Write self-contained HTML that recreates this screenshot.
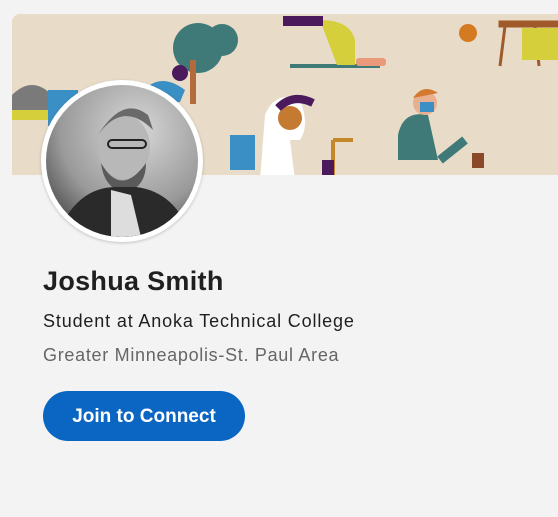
<!DOCTYPE html>
<html><head><style>
html,body{margin:0;padding:0;background:#f3f3f3;width:558px;height:517px;overflow:hidden;font-family:"Liberation Sans",sans-serif}
.banner{position:absolute;left:12px;top:14px;width:546px;height:161px;background:#e8dcc8;border-radius:8px 0 0 0;overflow:hidden}
.av{position:absolute;left:41px;top:80px;width:162px;height:162px;border-radius:50%;background:#fff;box-shadow:0 1px 3px rgba(0,0,0,.2)}
.av .in{position:absolute;left:5px;top:5px;width:152px;height:152px;border-radius:50%;background:radial-gradient(circle at 60% 30%,#d8d8d8,#9a9a9a 55%,#3a3a3a 90%);overflow:hidden}
h1{position:absolute;left:43px;top:266px;margin:0;font-size:27px;font-weight:bold;color:#1f1f1f;letter-spacing:0.3px}
.t{position:absolute;left:43px;top:311px;font-size:18px;color:#1f1f1f;letter-spacing:0.85px}
.l{position:absolute;left:43px;top:345px;font-size:18px;color:#666;letter-spacing:0.7px}
.b{position:absolute;left:43px;top:391px;width:202px;height:50px;border-radius:25px;background:#0a66c2;color:#fff;font-size:19px;font-weight:bold;text-align:center;line-height:52px}
</style></head><body>
<div class="banner">
<svg width="546" height="161" viewBox="12 14 546 161">
<circle cx="198" cy="48" r="25" fill="#3f7a78"/><circle cx="222" cy="40" r="16" fill="#3f7a78"/><rect x="190" y="60" width="6" height="44" fill="#b46a3a"/>
<path d="M150 85 q15-10 35 5 l-5 12 h-25z" fill="#3a8fc4"/><circle cx="180" cy="73" r="8" fill="#4a1a5c"/>
<rect x="290" y="64" width="90" height="4" fill="#3f7a78"/><path d="M320 20 q30 0 35 20 v25 h-18z" fill="#d4cf3a"/>
<path d="M283 16 h40 v10 h-40z" fill="#4a1a5c"/>
<rect x="356" y="58" width="30" height="8" rx="3" fill="#e89a7a"/>
<circle cx="468" cy="33" r="9" fill="#d47a20"/>
<path d="M500 22 h58 v4 h-58z M505 26 l-5 40 M535 26 l4 40" stroke="#a05a2a" stroke-width="3" fill="#a05a2a"/>
<path d="M522 28 h36 v32 h-36z" fill="#d4cf3a"/>
<path d="M12 95 q20-20 40 0 v20 h-40z" fill="#7a7a7a"/><rect x="12" y="110" width="40" height="10" fill="#d4cf3a"/>
<rect x="48" y="90" width="30" height="36" fill="#3a8fc4"/>
<path d="M265 115 q10-25 35-15 q10 25 0 40 h-10 l5 40 h-35z" fill="#fff"/><circle cx="290" cy="118" r="12" fill="#c47a30"/><path d="M278 108 q15-15 35-5" stroke="#4a1a5c" stroke-width="8" fill="none"/>
<rect x="230" y="135" width="25" height="35" fill="#3a8fc4"/>
<path d="M333 140 v35 M333 140 h20" stroke="#c4882a" stroke-width="4" fill="none"/><rect x="322" y="160" width="12" height="15" fill="#4a1a5c"/>
<path d="M398 175 v-40 q5-25 30-20 l10 45 h-40z" fill="#3f7a78"/><circle cx="425" cy="103" r="12" fill="#e8b090"/><path d="M413 98 q10-15 25-5z" fill="#d47a30"/><rect x="420" y="102" width="14" height="10" fill="#3a8fc4"/>
<path d="M440 160 l25-20" stroke="#3f7a78" stroke-width="9"/><rect x="472" y="153" width="12" height="15" fill="#8a4a2a"/>
</svg>
</div>
<div class="av"><div class="in">
<svg width="152" height="152"><ellipse cx="78" cy="62" rx="26" ry="32" fill="#b8b8b8"/><path d="M52 50 q25-35 55-5 q-3-10-5-15 q-25-20-50 20z" fill="#6a6a6a"/><path d="M55 78 q20 35 45 0 q0 25-22 30 q-20-5-23-30z" fill="#5a5a5a"/><path d="M10 152 q20-50 60-50 h20 q40 5 55 50z" fill="#2a2a2a"/><path d="M65 105 l20 5 l10 42 h-30z" fill="#ddd"/><rect x="62" y="55" width="38" height="8" rx="4" fill="none" stroke="#222" stroke-width="2"/></svg>
</div></div>
<h1>Joshua Smith</h1>
<div class="t">Student at Anoka Technical College</div>
<div class="l">Greater Minneapolis-St. Paul Area</div>
<div class="b">Join to Connect</div>
</body></html>
